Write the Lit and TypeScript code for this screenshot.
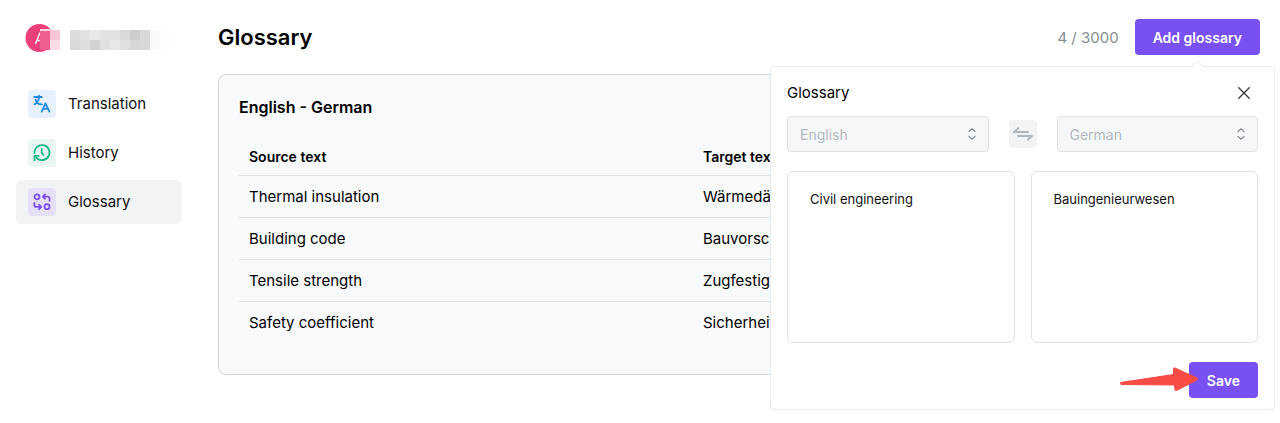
import { LitElement, html, css, svg } from "lit";
import { customElement, state } from "lit/decorators.js";

const base = css`
  * { box-sizing: border-box; }
  button, select, textarea, input { font-family: inherit; margin: 0; }
  button { cursor: pointer; }
`;

const chevrons = html`<svg class="chevrons" width="10" height="14" viewBox="0 0 10 14" fill="none" stroke="#868e96" stroke-width="1.2" stroke-linecap="round" stroke-linejoin="round" aria-hidden="true"><path d="M2 4.500 5 1.800l3 2.700M2 9.500l3 2.700 3-2.700"/></svg>`;

const icons: Record<string, unknown> = {
  translation: svg`<path d="M6 .4v1.600M1.200 2h7.600M6.200 2.200C5.800 5.600 4.200 8 1.500 9.400M2.600 4.600C3 7.400 5.500 9.400 9 9.400M8.700 16.600l3.800-8.300 3.900 8.300M10.200 13.900h4.700"/>`,
  history: svg`<path d="M1.500 9.200A7.500 7.500 0 1 1 3.600 13.800M1.500 16.200V11.900H5.700M8.700 4.800v4L10.400 11"/>`,
  glossary: svg`<circle cx="4" cy="3.800" r="2.500"/><circle cx="14" cy="13.700" r="2.500"/><path d="M16.600 7.700V5.600a2 2 0 0 0-2-2H10M12 1.400 9.800 3.600 12 5.800M1.400 9.800v2.100a2 2 0 0 0 2 2H8M6 11.700l2.200 2.200L6 16.100"/>`,
};

const mosaic: [string, string][] = [
  ["#dcdcdc", "#dadada"], ["#e2e2e2", "#dedede"], ["#e8e8e8", "#d2d2d2"], ["#e2e2e2", "#e0e0e0"],
  ["#e2e2e2", "#e8e8e8"], ["#dadada", "#e0e0e0"], ["#cccccc", "#d8d8d8"], ["#d9d9d9", "#d9d9d9"],
  ["#fafafa", "#fafafa"], ["#fdfdfd", "#fdfdfd"],
];

@customElement("side-nav")
class SideNav extends LitElement {
  static styles = [base, css`
    :host { display: flex; flex-direction: column; gap: 30px; }
    .account { display: block; margin-left: 8px; }
    .list { display: flex; flex-direction: column; gap: 5px; }
    .item { display: flex; align-items: center; gap: 12px; padding: 8px 12px; border-radius: 6px; color: #111; text-decoration: none; font-size: 15px; line-height: 28px; }
    .item.active { background: #f1f3f5; }
    .tile { display: grid; place-items: center; width: 28px; height: 28px; border-radius: 4px; }
    .tile svg { fill: none; stroke: currentColor; stroke-width: 1.8; stroke-linecap: round; stroke-linejoin: round; }
    .translation { background: #e7f1fe; color: #228be6; }
    .history { background: #e9f6f1; color: #12b886; }
    .glossary { background: #e5e0f7; color: #7950f2; }
  `];

  render() {
    return html`
      <svg class="account" width="150" height="28" viewBox="0 0 150 28" role="img" aria-label="Account">
        <circle cx="15.500" cy="14" r="14" fill="#ec407a"/>
        <path d="M11.500 20 16 8.500M13 16.500h3" fill="none" stroke="#fff" stroke-width="1.300"/>
        <rect x="16" y="6" width="10" height="20" fill="#ee5f8d"/>
        <rect x="16" y="5" width="10" height="2" fill="#fbd5e0"/>
        <rect x="26" y="6" width="10" height="10" fill="#f8c6d5"/>
        <rect x="26" y="16" width="10" height="10" fill="#fadce5"/>
        ${mosaic.map(([a, b], i) => svg`
          <rect x=${46 + i * 10} y="6" width="10" height="10" fill=${a}/>
          <rect x=${46 + i * 10} y="16" width="10" height="10" fill=${b}/>`)}
      </svg>
      <nav class="list">
        ${["Translation", "History", "Glossary"].map((name) => {
          const key = name.toLowerCase();
          return html`<a class="item ${key === "glossary" ? "active" : ""}" href="#${key}">
            <span class="tile ${key}"><svg width="18" height="18" viewBox="0 0 18 18" aria-hidden="true">${icons[key]}</svg></span>${name}</a>`;
        })}
      </nav>`;
  }
}

@customElement("glossary-table")
class GlossaryTable extends LitElement {
  static styles = [base, css`
    :host { display: block; border: 1px solid #cfd6de; border-radius: 8px; background: #f8f9fb; padding: 20px 20px 31px; }
    .title { margin: 0; font-size: 16px; line-height: 24px; font-weight: 600; }
    .table { width: 100%; margin-top: 20px; border-collapse: collapse; table-layout: fixed; }
    .tools { width: 92px; }
    .table th { padding: 7px 10px; font-size: 14px; line-height: 22px; font-weight: 600; text-align: left; }
    .table td { padding: 10px; font-size: 15px; line-height: 21px; border-top: 1px solid #dee2e6; }
    .table thead td { padding: 0; border: 0; }
  `];

  rows = [
    ["Thermal insulation", "Wärmedämmung"],
    ["Building code", "Bauvorschrift"],
    ["Tensile strength", "Zugfestigkeit"],
    ["Safety coefficient", "Sicherheitsbeiwert"],
  ];

  render() {
    return html`
      <h2 class="title">English - German</h2>
      <table class="table">
        <colgroup><col><col><col class="tools"></colgroup>
        <thead><tr><th scope="col">Source text</th><th scope="col">Target text</th><td></td></tr></thead>
        <tbody>${this.rows.map(([a, b]) => html`<tr><td>${a}</td><td>${b}</td><td></td></tr>`)}</tbody>
      </table>`;
  }
}

@customElement("glossary-dialog")
class GlossaryDialog extends LitElement {
  static styles = [base, css`
    :host { display: block; padding: 13px 16px 11px; background: #fff; border: 1px solid #e9ecef; border-radius: 4px; }
    .tip { position: absolute; top: -5px; left: 422px; width: 9px; height: 9px; background: #fff; border: 1px solid #e9ecef; border-right: 0; border-bottom: 0; transform: rotate(45deg); }
    .head { display: flex; justify-content: space-between; align-items: center; }
    .title { margin: 0; font-size: 15px; line-height: 25px; font-weight: 400; }
    .close { display: grid; place-items: center; width: 28px; height: 24px; padding: 0; border: 0; background: none; }
    .languages { display: flex; align-items: center; gap: 20px; margin-top: 11px; }
    .field { position: relative; flex: 1; display: flex; }
    .select { width: 100%; height: 36px; padding: 0 12px; border: 1px solid #dee2e6; border-radius: 4px; background: #f6f7f9; color: #b3b8bd; font-size: 14px; opacity: 1; appearance: none; }
    .chevrons { position: absolute; right: 12px; top: 11px; pointer-events: none; }
    .swap { display: grid; place-items: center; width: 28px; height: 28px; padding: 0; border: 0; border-radius: 4px; background: #f1f3f5; }
    .texts { display: grid; grid-template-columns: 1fr 1fr; gap: 16px; margin-top: 19px; }
    .text { width: 100%; height: 172px; padding: 16px 22px; border: 1px solid #dee2e6; border-radius: 6px; color: #111; background: #fff; font-size: 13px; line-height: 22px; resize: none; }
    .foot { display: flex; justify-content: flex-end; margin-top: 19px; }
    .action { position: relative; display: flex; }
    .save { height: 36px; padding: 0 18px; border: 0; border-radius: 4px; background: #7950f2; color: #fff; font-size: 14px; font-weight: 600; }
    .arrow { position: absolute; right: 59px; top: 4px; pointer-events: none; }
  `];

  render() {
    return html`
      <span class="tip"></span>
      <div class="head">
        <h2 class="title">Glossary</h2>
        <button class="close" aria-label="Close"><svg width="12" height="12" viewBox="0 0 12 12" stroke="#343a40" stroke-width="1.300" stroke-linecap="round"><path d="m.8.8 10.400 10.400M11.200.8.8 11.200"/></svg></button>
      </div>
      <div class="languages">
        <div class="field"><select class="select" aria-label="Source language" disabled><option>English</option></select>${chevrons}</div>
        <button class="swap" aria-label="Swap languages"><svg width="20" height="14" viewBox="0 0 20 14" fill="none" stroke="#adb5bd" stroke-width="1.900" stroke-linecap="round" stroke-linejoin="round"><path d="M15 5H1l4.200-3.700M5 9h14l-4.200 3.700"/></svg></button>
        <div class="field"><select class="select" aria-label="Target language" disabled><option>German</option></select>${chevrons}</div>
      </div>
      <div class="texts">
        <textarea class="text" aria-label="Source text" .value=${"Civil engineering"}></textarea>
        <textarea class="text" aria-label="Target text" .value=${"Bauingenieurwesen"}></textarea>
      </div>
      <div class="foot"><div class="action">
        <button class="save">Save</button>
        <svg class="arrow" width="80" height="26" viewBox="0 0 80 26" fill="#fa4b46" stroke="#fa4b46" stroke-linejoin="round" aria-hidden="true"><path d="M1.500 16.500 54.500 8.500V2.500Q55 1.500 56 2L78 12Q79 13 78 14L57.500 24.500Q56 25 56 23.500L55.500 19 2 18.500Z"/></svg>
      </div></div>`;
  }
}

@customElement("app-root")
class AppRoot extends LitElement {
  static styles = [base, css`
    :host { display: grid; grid-template-columns: 166px minmax(0, 1fr); column-gap: 36px; align-items: start; min-height: 100vh; padding: 19px 20px 0 16px; background: #fff; color: #000; font-family: Inter, "Liberation Sans", sans-serif; box-sizing: border-box; }
    .nav { padding-top: 5px; }
    .bar { display: flex; align-items: center; justify-content: space-between; margin-bottom: 19px; }
    .heading { margin: 0; font-size: 22px; line-height: 36px; font-weight: 600; }
    .right { display: flex; align-items: center; gap: 16px; }
    .count { color: #868e96; font-size: 15px; }
    .anchor { position: relative; display: flex; }
    .add { height: 36px; padding: 0 18px; border: 0; border-radius: 4px; background: #7950f2; color: #fff; font-size: 14px; font-weight: 600; }
    .popup { position: absolute; top: 47px; right: -15px; width: 505px; z-index: 1; }
  `];

  @state() open = true;

  render() {
    return html`
      <side-nav class="nav"></side-nav>
      <main>
        <header class="bar">
          <h1 class="heading">Glossary</h1>
          <div class="right">
            <span class="count">4 / 3000</span>
            <div class="anchor">
              <button class="add" aria-expanded=${this.open} @click=${() => (this.open = !this.open)}>Add glossary</button>
              ${this.open ? html`<glossary-dialog class="popup"></glossary-dialog>` : null}
            </div>
          </div>
        </header>
        <glossary-table></glossary-table>
      </main>`;
  }
}
